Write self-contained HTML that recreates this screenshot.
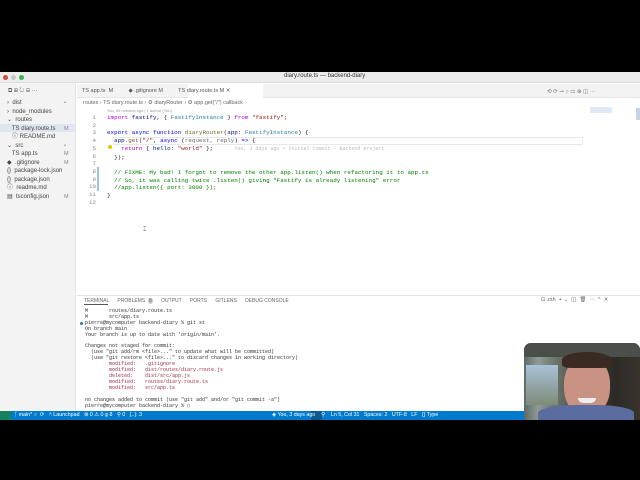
<!DOCTYPE html>
<html><head><meta charset="utf-8"><style>
*{margin:0;padding:0;box-sizing:border-box}
body{width:640px;height:480px;background:#000;position:relative;overflow:hidden;font-family:"Liberation Sans",sans-serif;}
.a{position:absolute;white-space:pre}
.mono{font-family:"Liberation Mono",monospace}
</style></head><body>
<div class="a" style="left:0;top:72px;width:640px;height:339px;background:#fff"></div>
<!-- title bar -->
<div class="a" style="left:0;top:72px;width:640px;height:11px;background:#ececec;border-bottom:1px solid #ddd"></div>
<div class="a" style="left:3px;top:75px;width:5px;height:5px;border-radius:50%;background:#e0443e"></div>
<div class="a" style="left:11px;top:75px;width:5px;height:5px;border-radius:50%;background:#c8c8c8"></div>
<div class="a" style="left:19px;top:75px;width:5px;height:5px;border-radius:50%;background:#3bb54a"></div>
<div class="a" style="left:284px;top:73px;font-size:6px;color:#333">diary.route.ts — backend-diary</div>
<!-- sidebar -->
<div class="a" style="left:0;top:83px;width:76px;height:328px;background:#f3f3f3;border-right:1px solid #e4e4e4"></div>
<div class="a" style="left:0;top:124px;width:76px;height:8px;background:#dfe6f0"></div>
<div class="a" style="left:8px;top:88px;font-size:6px;color:#555">⧉ ⊞ ↻ ⊟ ···</div>
<div class="a" style="left:7px;top:99px;font-size:6px;color:#444;line-height:8.55px">›  dist
›  node_modules
⌄  routes
   TS diary.route.ts
   ⓘ README.md
⌄  src
   TS app.ts
◆  .gitignore
{}  package-lock.json
{}  package.json
ⓘ  readme.md
▤  tsconfig.json</div>
<div class="a" style="left:64px;top:99px;font-size:5.5px;color:#888;line-height:8.55px">•


M

•
M
M



M</div>
<!-- tabs -->
<div class="a" style="left:77px;top:84px;width:563px;height:14px;background:#f3f3f3;border-bottom:1px solid #e4e4e4"></div>
<div class="a" style="left:188px;top:84px;width:75px;height:14px;background:#fff"></div>
<div class="a" style="left:82px;top:88px;font-size:5.5px;color:#555">TS app.ts  M          ◆ .gitignore M          TS diary.route.ts M ✕</div>
<div class="a" style="left:547px;top:89px;font-size:5.5px;color:#666">⟲ ⟳ ⊸ ○ ▭ ⊛ ◫ ···</div>
<!-- breadcrumbs -->
<div class="a" style="left:83px;top:100px;font-size:5.5px;color:#666">routes › TS diary.route.ts › ⚙ diaryRouter › ⚙ app.get("/") callback</div>
<div class="a" style="left:107px;top:108px;font-size:4px;color:#999">You, 55 minutes ago | 1 author (You)</div>
<!-- code -->
<div class="a mono" style="left:86px;top:114px;font-size:5.8px;line-height:7.7px;color:#888;text-align:right;width:10px">1
2
3
4
5
6
7
8
9
10
11
12</div>
<div class="a" style="left:113px;top:137px;width:470px;height:8px;border:1px solid #e8e8e8"></div>
<div class="a" style="left:97px;top:167px;width:2px;height:24px;background:#9ec3d8"></div>
<div class="a mono" style="left:107px;top:114px;font-size:5.9px;line-height:7.7px;color:#222"><span style="color:#af00db">import</span> <span style="color:#001080">fastify</span>, { <span style="color:#267f99">FastifyInstance</span> } <span style="color:#af00db">from</span> <span style="color:#a31515">"fastify"</span>;

<span style="color:#0000ff">export async function</span> <span style="color:#795e26">diaryRouter</span>(<span style="color:#001080">app</span>: <span style="color:#267f99">FastifyInstance</span>) {
  <span style="color:#001080">app</span>.<span style="color:#795e26">get</span>(<span style="color:#a31515">"/"</span>, <span style="color:#0000ff">async</span> (<span style="color:#666">request, reply</span>) <span style="color:#0000ff">=&gt;</span> {
    <span style="color:#af00db">return</span> { <span style="color:#001080">hello</span>: <span style="color:#a31515">"world"</span> };      <span style="color:#bbb;font-size:5px">You, 3 days ago • Initial Commit - Backend project</span>
  });

  <span style="color:#008000">// FIXME: My bad! I forgot to remove the other app.listen() when refactoring it to app.ts</span>
  <span style="color:#008000">// So, it was calling twice .listen() giving "Fastify is already listening" error</span>
  <span style="color:#008000">//app.listen({ port: 3000 });</span>
}
</div>
<div class="a" style="left:108px;top:145px;width:4px;height:4px;border-radius:50%;background:#e8c000"></div>
<div class="a" style="left:143px;top:227px;font-size:6px;color:#555">⌶</div>
<div class="a" style="left:590px;top:107px;width:22px;height:6px;background:#dfe8f5"></div>
<div class="a" style="left:636px;top:108px;width:4px;height:12px;background:#c8d4e4"></div>
<!-- panel -->
<div class="a" style="left:77px;top:295px;width:563px;height:1px;background:#e4e4e4"></div>
<div class="a" style="left:84px;top:298px;font-size:5px;color:#666">TERMINAL      PROBLEMS  <span style="background:#ccc;border-radius:3px;padding:0 1px">8</span>      OUTPUT      PORTS      GITLENS      DEBUG CONSOLE</div>
<div class="a" style="left:84px;top:304px;width:24px;height:1px;background:#555"></div>
<div class="a" style="left:541px;top:297px;font-size:5.5px;color:#666">⊡ zsh  + ⌄  ◫  🗑  ···  ^  ✕</div>
<div class="a mono" style="left:85px;top:309px;font-size:5px;line-height:5.9px;color:#333">M       routes/diary.route.ts
M       src/app.ts
pierre@mycomputer backend-diary % git st
On branch main
Your branch is up to date with 'origin/main'.

Changes not staged for commit:
  (use "git add/rm &lt;file&gt;..." to update what will be committed)
  (use "git restore &lt;file&gt;..." to discard changes in working directory)
<span style="color:#a0304a">        modified:   .gitignore
        modified:   dist/routes/diary.route.js
        deleted:    dist/src/app.js
        modified:   routes/diary.route.ts
        modified:   src/app.ts</span>

no changes added to commit (use "git add" and/or "git commit -a")
pierre@mycomputer backend-diary % ▯</div>
<div class="a" style="left:80px;top:322px;width:3px;height:3px;border-radius:50%;background:#2a7ab8"></div>
<!-- status bar -->
<div class="a" style="left:0;top:411px;width:640px;height:9px;background:#007acc"></div>
<div class="a" style="left:0;top:411px;width:11px;height:9px;background:#16825d"></div>
<div class="a" style="left:311px;top:411px;width:11px;height:9px;background:#0e5a8c"></div>
<div class="a" style="left:14px;top:412px;font-size:5.3px;color:#fff">ᚴ main* ○  ⟳   ⑃ Launchpad   ⊗ 0 ⚠ 0 ⓘ 8   ⚲ 0   {..}: 3</div>
<div class="a" style="left:272px;top:412px;font-size:5.3px;color:#fff">◈ You, 3 days ago    ⚲    Ln 5, Col 31   Spaces: 2   UTF-8   LF   {} Type</div>
<!-- webcam -->
<div class="a" style="left:524px;top:343px;width:116px;height:77px;border-radius:7px 7px 0 0;overflow:hidden;background:linear-gradient(90deg,#5c6a64 0%,#8f9a98 12%,#6f7a70 25%,#3b3a36 55%,#2d2a26 80%,#3a342d 100%)">
  <div style="position:absolute;left:0;top:0;width:116px;height:14px;background:#4a4f4a"></div>
  <div style="position:absolute;left:2px;top:22px;width:32px;height:40px;background:linear-gradient(#a9c2d6,#7d8b7a)"></div>
  <div style="position:absolute;left:40px;top:14px;width:46px;height:58px;border-radius:45%;background:#c99282"></div>
  <div style="position:absolute;left:38px;top:9px;width:50px;height:16px;border-radius:50% 50% 20% 20%;background:#3a2a22"></div>
  <div style="position:absolute;left:54px;top:55px;width:18px;height:5px;border-radius:0 0 8px 8px;background:#eee"></div>
  <div style="position:absolute;left:14px;top:62px;width:96px;height:20px;border-radius:40% 40% 0 0;background:#5a6ca0"></div>
</div>
</body></html>
